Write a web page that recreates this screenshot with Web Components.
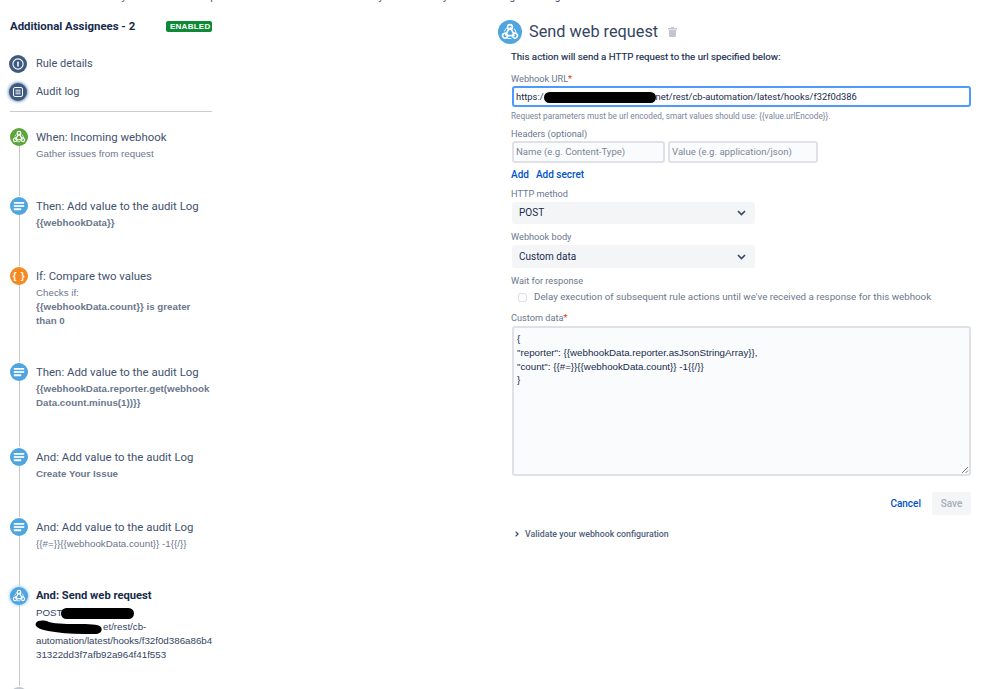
<!DOCTYPE html>
<html lang="en"><head><meta charset="utf-8"><title>Send web request</title>
<style>
html,body{margin:0;padding:0;background:#fff}
body{width:999px;height:689px;overflow:hidden;font-family:Roboto,"Liberation Sans",sans-serif;color:#172b4d}
</style></head><body>
<rule-page>
  <intro-line>Automation rules allow you to automate repetitive tasks based on criteria that you set. Here you can manage existing rules and create new ones. <a>Learn more about automation.</a></intro-line>
  <rule-sidebar slot="side">
    <rule-head name="Additional Assignees - 2" status="ENABLED"></rule-head>
    <nav-item icon="info" style="--mt:18px">Rule details</nav-item>
    <nav-item icon="log" glow style="--mt:10px">Audit log</nav-item>
    <hr-line></hr-line>
    <rule-step icon="hook" color="#5aa63a" label="When: Incoming webhook" style="--h:69px"><sub-text>Gather issues from request</sub-text></rule-step>
    <rule-step icon="list" color="#4ea5e0" label="Then: Add value to the audit Log" style="--h:70px"><sub-text strong>{{webhookData}}</sub-text></rule-step>
    <rule-step icon="brace" color="#f58a22" label="If: Compare two values" style="--h:96px"><sub-text>Checks if:<br><b>{{webhookData.count}} is greater<br>than 0</b></sub-text></rule-step>
    <rule-step icon="list" color="#4ea5e0" label="Then: Add value to the audit Log" style="--h:85px"><sub-text strong>{{webhookData.reporter.get(webhook<br>Data.count.minus(1))}}</sub-text></rule-step>
    <rule-step icon="list" color="#4ea5e0" label="And: Add value to the audit Log" style="--h:70px"><sub-text strong>Create Your Issue</sub-text></rule-step>
    <rule-step icon="list" color="#4ea5e0" label="And: Add value to the audit Log" style="--h:69px"><sub-text>{{#=}}{{webhookData.count}} -1{{/}}</sub-text></rule-step>
    <rule-step icon="hook" color="#4ea5e0" glow active label="And: Send web request" style="--h:100px"><sub-text dark>POST<black-out w="73" h="11" style="margin-left:-2px"></black-out><br><black-out w="68" h="14" tilt style="margin-left:-1px"></black-out>et/rest/cb-<br>automation/latest/hooks/f32f0d386a86b4<br>31322dd3f7afb92a964f41f553</sub-text></rule-step>
    <rule-step icon="none" color="#c1c7d0" label="" style="--h:20px"></rule-step>
  </rule-sidebar>
  <action-panel slot="main">
    <panel-head>Send web request</panel-head>
    <lead-text>This action will send a HTTP request to the url specified below:</lead-text>
    <form-label required style="--mt:8px">Webhook URL</form-label>
    <text-box focus style="--mt:0;--h:21px">https:/<black-out w="112" h="11"></black-out>net/rest/cb-automation/latest/hooks/f32f0d386</text-box>
    <help-text>Request parameters must be url encoded, smart values should use: {{value.urlEncode}}.</help-text>
    <form-label style="--mt:5px">Headers (optional)</form-label>
    <header-row>
      <text-box placeholder style="--w:153px;--h:22px">Name (e.g. Content-Type)</text-box>
      <text-box placeholder style="--w:150px;--h:22px">Value (e.g. application/json)</text-box>
    </header-row>
    <link-row><a-link>Add</a-link><a-link>Add secret</a-link></link-row>
    <form-label style="--mt:5px">HTTP method</form-label>
    <select-box style="--mt:1px">POST</select-box>
    <form-label style="--mt:6px">Webhook body</form-label>
    <select-box style="--mt:1px;--h:23px">Custom data</select-box>
    <form-label style="--mt:6px">Wait for response</form-label>
    <check-row>Delay execution of subsequent rule actions until we've received a response for this webhook</check-row>
    <form-label required style="--mt:6px">Custom data</form-label>
    <code-area>{
"reporter": {{webhookData.reporter.asJsonStringArray}},
"count": {{#=}}{{webhookData.count}} -1{{/}}
}</code-area>
    <action-row><a-link cancel>Cancel</a-link><save-button>Save</save-button></action-row>
    <expand-row>Validate your webhook configuration</expand-row>
  </action-panel>
</rule-page>
<script>
const HOOKPIECE=(s)=>`<circle cx="12" cy="7" r="2.4"/><path d="M10.8 9.2 7.6 14.9"/><path d="M9 7.6A6 6 0 0 0 6.6 11" stroke-width="${s*.6}"/>`;
const ICONS={
 hook:(s)=>`<g fill="none" stroke="#fff" stroke-width="${s}" stroke-linecap="round">${[0,120,240].map(a=>`<g transform="rotate(${a} 12 12.8)">${HOOKPIECE(s)}</g>`).join("")}</g>`,
 list:()=>`<g fill="#fff"><rect x="5" y="6.5" width="14" height="2.4" rx=".6"/><rect x="5" y="10.8" width="14" height="2.4" rx=".6" opacity=".85"/><rect x="5" y="15.1" width="10" height="2.4" rx=".6"/></g>`,
 brace:()=>`<text x="12" y="16.6" text-anchor="middle" font-family="Liberation Sans" font-weight="700" font-size="13" fill="#fff" letter-spacing="1">{ }</text>`,
 info:()=>`<circle cx="12" cy="12" r="6.8" fill="none" stroke="#fff" stroke-width="1.5"/><rect x="11" y="8.5" width="2" height="7" rx="1" fill="#fff"/>`,
 log:()=>`<rect x="6" y="6" width="12" height="12" rx="2" fill="none" stroke="#fff" stroke-width="1.3"/><path d="M8.6 9.6h6.8M8.6 12h6.8M8.6 14.4h6.8" stroke="#fff" stroke-width="1.2"/>`,
 none:()=>``
};
const def=(name,css,html)=>{
 customElements.define(name,class extends HTMLElement{
  constructor(){super();this.attachShadow({mode:"open"}).innerHTML=`<style>${css}</style>`+(typeof html==="function"?"":html)}
  connectedCallback(){if(typeof html==="function")this.shadowRoot.innerHTML=`<style>${css}</style>`+html(this)}
 })
};
def("rule-page",`:host{display:block;width:999px}
 .cols{display:flex;padding:0 28px 0 10px;gap:286px;margin-top:10px}`,
 `<slot></slot><div class="cols"><slot name="side"></slot><slot name="main"></slot></div>`);
def("intro-line",`:host{display:block;margin-top:-10px;height:14px;padding-left:10px;font:10.65px/14px Roboto,sans-serif;color:#42526e;white-space:nowrap}
 ::slotted(a){color:#0052cc}`,`<slot></slot>`);
def("rule-sidebar",`:host{display:block;width:202px;flex:none}`,`<slot></slot>`);
def("rule-head",`:host{display:flex;justify-content:space-between;align-items:center;height:22px;margin-top:1px}
 b{font:700 11.4px/16px Roboto,sans-serif;color:#172b4d}
 span{background:#0e8a37;color:#fff;font:700 8px/11px "Liberation Sans",sans-serif;letter-spacing:.25px;padding:0 4px;border-radius:2px;height:11px;width:38px;text-align:center;display:block}`,
 h=>`<b>${h.getAttribute("name")}</b><span>${h.getAttribute("status")}</span>`);
def("nav-item",`:host{display:flex;align-items:center;gap:9px;height:18px;margin:var(--mt,0) 0 0 -1px;font:11px/18px Roboto,sans-serif;color:#42526e}
 svg{width:18px;height:18px;flex:none;border-radius:50%;background:#3f5a80}
 :host([glow]) svg{box-shadow:0 0 3px 1px #7f9cc4}`,
 h=>`<svg viewBox="0 0 24 24">${ICONS[h.getAttribute("icon")](1.4)}</svg><slot></slot>`);
def("hr-line",`:host{display:block;height:1px;background:#ccc;margin:10px 0 16px}`,``);
def("rule-step",`:host{display:flex;gap:8px;height:var(--h,69px);box-sizing:border-box}
 .rail{width:18px;flex:none;display:flex;flex-direction:column;align-items:center}
 svg{width:18px;height:18px;flex:none;border-radius:50%}
 i{display:block;width:1px;flex:1;background:#c8c8c8;margin-bottom:1px}
 .t{font:11.4px/18px Roboto,sans-serif;color:#42526e;white-space:nowrap}
 :host([active]) .t{font-weight:700;color:#172b4d;font-size:11.2px}
 :host([glow]) svg{box-shadow:0 0 3px 1px #a9d4f2}`,
 h=>`<div class="rail"><svg viewBox="0 0 24 24" style="background:${h.getAttribute("color")}">${ICONS[h.getAttribute("icon")](1.6)}</svg>${h.getAttribute("icon")==="none"?"":"<i></i>"}</div><div><div class="t">${h.getAttribute("label")}</div><slot></slot></div>`);
def("sub-text",`:host{display:block;font:9.75px/14px "Liberation Sans",sans-serif;color:#6b778c;margin-top:1px;white-space:nowrap}
 :host([strong]){font-weight:700}
 :host([dark]){color:#344563}
 ::slotted(b){font-weight:700}`,`<slot></slot>`);
def("black-out",`:host{display:inline-block;vertical-align:middle;line-height:0}
 svg{display:block}`,
 h=>{const w=+h.getAttribute("w"),a=+h.getAttribute("h");
  return h.hasAttribute("tilt")
  ?`<svg width="${w}" height="${a}" viewBox="0 0 68 14"><path d="M1 3C3 0 9 0 14 2c8 2 20 2 30 2 8 0 20 0 22 3 2 4-1 7-6 7-14 0-28 0-40-2C10 11-2 8 1 3z" fill="#000"/></svg>`
  :`<svg width="${w}" height="${a}"><rect width="${w}" height="${a}" rx="${a/2}" fill="#000"/></svg>`});
def("action-panel",`:host{display:block;width:473px;flex:none}
 .b{padding-left:13px}`,`<div class="b"><slot></slot></div>`);
def("panel-head",`:host{display:flex;align-items:center;margin:6px 0 0 -13px;height:24px;font:16.3px/24px Roboto,sans-serif;color:#344563;gap:7px}
 svg{flex:none}
 .w{width:24px;height:24px;border-radius:50%;background:#4ea5e0;display:block}
 .tr{margin-left:3px}`,
 `<svg class="w" viewBox="0 0 24 24">${ICONS.hook(1.6)}</svg><slot></slot><svg class="tr" width="9" height="10" viewBox="0 0 9 10"><path d="M3 0h3v1h3v1.4H0V1h3zM1 3h7v6a1 1 0 0 1-1 1H2a1 1 0 0 1-1-1z" fill="#c1c7d0"/></svg>`);
def("lead-text",`:host{display:block;margin-top:6px;font:9.7px/14px Roboto,sans-serif;color:#172b4d;white-space:nowrap;-webkit-text-stroke:.15px #172b4d}`,`<slot></slot>`);
def("form-label",`:host{display:block;margin-top:var(--mt,0);font:9.2px/14px Roboto,sans-serif;color:#6b778c;white-space:nowrap}
 i{color:#de350b;font-style:normal}`,
 h=>`<slot></slot>${h.hasAttribute("required")?"<i>*</i>":""}`);
def("text-box",`:host{display:flex;align-items:center;box-sizing:border-box;margin-left:1px;margin-top:var(--mt,0);width:var(--w,459px);height:var(--h,22px);border:2px solid #dfe1e6;border-radius:3px;background:#fafbfc;padding:0 2px;font:9.4px/14px Roboto,sans-serif;color:#172b4d;white-space:nowrap;overflow:hidden}
 :host([focus]){border-color:#4c9aff;background:#fff;display:block;line-height:17px}
 :host([placeholder]){color:#7a869a;padding:0 2px;margin-left:0;font-size:9.6px}`,`<slot></slot>`);
def("help-text",`:host{display:block;margin-top:3px;font:8.25px/12px Roboto,sans-serif;color:#7a869a;white-space:nowrap}`,`<slot></slot>`);
def("header-row",`:host{display:flex;gap:3px;margin:0 0 0 1px}`,`<slot></slot>`);
def("link-row",`:host{display:flex;gap:7px;margin-top:5px;height:14px}`,`<slot></slot>`);
def("a-link",`:host{display:block;font:500 10px/14px Roboto,sans-serif;color:#0052cc;white-space:nowrap}`,`<slot></slot>`);
def("select-box",`:host{display:flex;align-items:center;justify-content:space-between;box-sizing:border-box;margin:var(--mt,2px) 0 0 1px;width:243px;height:var(--h,22px);background:#f4f5f7;border-radius:3px;padding:0 9px 0 7px;font:10px/14px Roboto,sans-serif;color:#172b4d}
 svg{flex:none}`,`<slot></slot><svg width="9" height="6" viewBox="0 0 9 6"><path d="M1 1l3.5 3.5L8 1" fill="none" stroke="#344563" stroke-width="1.6"/></svg>`);
def("check-row",`:host{display:flex;align-items:center;gap:7px;margin:1px 0 0 7px;height:16px;font:9.75px/14px Roboto,sans-serif;color:#6b778c;white-space:nowrap}
 i{display:block;flex:none;box-sizing:border-box;width:9px;height:9px;border:1px solid #dfe1e6;border-radius:2px;background:#fafbfc}`,`<i></i><slot></slot>`);
def("code-area",`:host{display:block;position:relative;box-sizing:border-box;margin:1px 0 0 1px;width:459px;height:150px;border:2px solid #dfe1e6;border-radius:3px;background:#fafbfc;padding:4px 3px;font:9.75px/13.8px "Liberation Sans",sans-serif;color:#172b4d;white-space:pre}
 svg{position:absolute;right:0;bottom:0}`,`<slot></slot><svg width="8" height="8" viewBox="0 0 8 8"><path d="M1 7l6-6M4.5 7L7 4.5" stroke="#777" stroke-width="1"/></svg>`);
def("action-row",`:host{display:flex;justify-content:flex-end;align-items:center;gap:11px;margin:16px 0 0 1px;width:459px}`,`<slot></slot>`);
def("save-button",`:host{display:block;box-sizing:border-box;width:39px;height:23px;background:#f4f5f7;border-radius:3px;text-align:center;font:500 10px/23px Roboto,sans-serif;color:#a5adba}`,`<slot></slot>`);
def("expand-row",`:host{display:flex;align-items:center;gap:6px;margin:12px 0 0 4px;height:14px;font:500 8.8px/14px Roboto,sans-serif;color:#505f79;white-space:nowrap}
 svg{flex:none}`,`<svg width="4" height="6" viewBox="0 0 4 6"><path d="M.6.6 3 3 .6 5.4" fill="none" stroke="#344563" stroke-width="1.2"/></svg><slot></slot>`);
</script>
</body></html>
